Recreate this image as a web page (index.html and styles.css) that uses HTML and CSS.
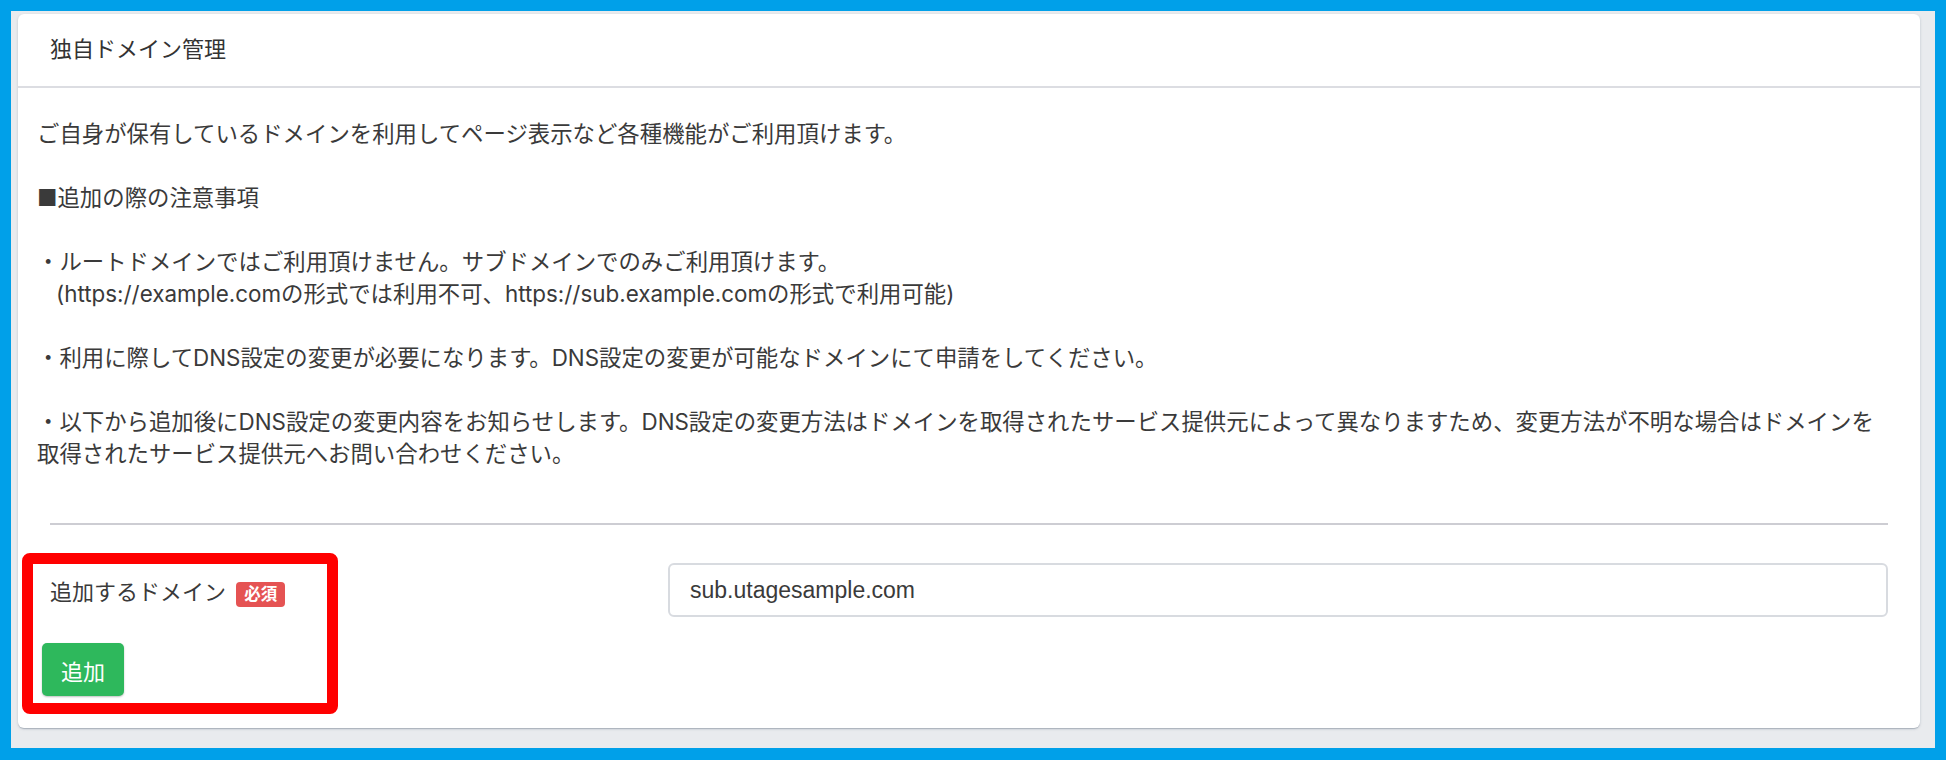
FILE: index.html
```html
<!DOCTYPE html>
<html lang="ja">
<head>
  <meta charset="UTF-8" />
  <meta name="viewport" content="width=device-width, initial-scale=1.0"/>
  <title>独自ドメイン管理</title>
  <link rel="stylesheet" href="styles.css">
</head>
<body>

<div class="frame">
  <div class="card">
    <!-- HEADER -->
    <div class="card-header">独自ドメイン管理</div>

    <!-- BODY -->
    <div class="card-body">
      <div class="notes">
        <p>ご自身が保有しているドメインを利用してページ表示など各種機能がご利用頂けます。</p>
        <p>■追加の際の注意事項</p>
        <p>・ルートドメインではご利用頂けません。サブドメインでのみご利用頂けます。<br/><span class="indent">(https://example.comの形式では利用不可、https://sub.example.comの形式で利用可能)</span></p>
        <p>・利用に際してDNS設定の変更が必要になります。DNS設定の変更が可能なドメインにて申請をしてください。</p>
        <p>・以下から追加後にDNS設定の変更内容をお知らせします。DNS設定の変更方法はドメインを取得されたサービス提供元によって異なりますため、変更方法が不明な場合はドメインを<br/>取得されたサービス提供元へお問い合わせください。</p>
      </div>

      <hr class="divider" />

      <div class="form-row">
        <label class="form-label" for="domain">追加するドメイン <span class="badge">必須</span></label>
        <input type="text" id="domain" class="form-input" value="sub.utagesample.com" />
      </div>
      <button class="btn-add">追加</button>
    </div>

    <div class="highlight"></div>
  </div>
</div>

</body>
</html>
```

FILE: styles.css
```css
* { box-sizing: border-box; }
html, body {
  margin: 0; padding: 0;
  font-family: 'Liberation Sans', 'Noto Sans CJK JP', sans-serif;
  color: #333;
  background: #00a0e9;
}
body { padding: 11px 11px 12px; }

.frame {
  height: 737px;
  background: #e9ebee;
  padding: 3px 15px 0 7px;
}
.card {
  position: relative;
  height: 714px;
  background: #fff;
  border-radius: 6px;
  box-shadow: 0 1px 1px rgba(60, 75, 100, .14), 0 2px 1px -1px rgba(60, 75, 100, .12), 0 1px 3px rgba(60, 75, 100, .2);
}
.card-header {
  height: 74px;
  padding: 0 32px;
  font-size: 22px;
  line-height: 72px;
  border-bottom: 2px solid #dcdde2;
}
.card-body { padding: 0 32px; }

.notes {
  margin-left: -13px;
  padding-top: 30px;
  font-family: 'Inter', 'Noto Sans CJK JP', sans-serif;
  font-size: 22.4px;
  line-height: 32px;
  color: #3a3a3a;
}
.notes p { margin: 0 0 32px; }
.notes p:last-child { margin-bottom: 0; }
.indent { padding-left: 19px; }

.divider {
  margin: 53px 0 0;
  border: none;
  border-top: 2px solid #cdcdd3;
}

.form-row {
  display: flex;
  align-items: center;
  margin-top: 38px;
}
.form-label {
  width: 618px;
  font-size: 22px;
  color: #3a3a3a;
}
.badge {
  display: inline-block;
  margin-left: 4px;
  padding: 0 8px;
  height: 25px;
  line-height: 25px;
  font-size: 16.5px;
  font-weight: bold;
  color: #fff;
  background: #e55353;
  border-radius: 4px;
}
.form-input {
  flex: 1;
  height: 54px;
  padding: 0 20px;
  font-family: inherit;
  font-size: 23px;
  color: #3a3a3a;
  border: 2px solid #d8dbe0;
  border-radius: 6px;
  outline: none;
}

.btn-add {
  display: block;
  margin: 26px 0 0 -8px;
  height: 53px;
  padding: 0 19px;
  font-family: inherit;
  font-size: 22px;
  color: #fff;
  background: #2eb85c;
  border: none;
  border-radius: 5px;
  box-shadow: 0 1px 2px rgba(0, 0, 0, .25);
}

/* annotation frame over the form */
.highlight {
  position: absolute;
  left: 4px; top: 539px;
  width: 316px; height: 161px;
  border: 11px solid #ff0000;
  border-radius: 8px;
}
```
